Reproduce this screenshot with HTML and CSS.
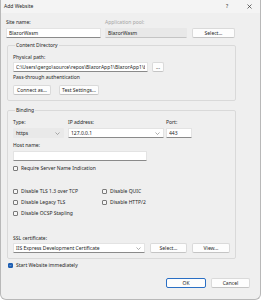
FILE: index.html
```html
<!DOCTYPE html>
<html lang="en">
<head>
    <meta charset="UTF-8">
    <meta name="viewport" content="width=device-width, initial-scale=1.0">
    <title>Add Website</title>
    <link rel="stylesheet" href="styles.css">
</head>
<body>

    <div class="dialog">
        <div class="titlebar">
            <span class="title">Add Website</span>
            <span class="tb-btn help">?</span>
            <span class="tb-btn close">
                <svg width="5" height="5" viewBox="0 0 5 5"><path d="M0.5 0.5L4.5 4.5M4.5 0.5L0.5 4.5" stroke="#333" stroke-width="0.7"/></svg>
            </span>
        </div>

        <div class="content">
            <div class="top-row">
                <div class="field site">
                    <label>Site name:</label>
                    <input class="textbox" type="text" value="BlazorWasm">
                </div>
                <div class="field pool">
                    <label class="disabled">Application pool:</label>
                    <input class="textbox readonly" type="text" value="BlazorWasm" readonly>
                </div>
                <button class="btn pool-btn">Select...</button>
            </div>

            <fieldset class="group content-dir">
                <legend>Content Directory</legend>
                <label class="phys">Physical path:</label>
                <div class="path-row">
                    <input class="textbox path" type="text" value="C:\Users\gergo\source\repos\BlazorApp1\BlazorApp1\b">
                    <button class="btn dots">...</button>
                </div>
                <label class="pass">Pass-through authentication</label>
                <div class="btn-row">
                    <button class="btn connect">Connect as...</button>
                    <button class="btn test">Test Settings...</button>
                </div>
            </fieldset>

            <fieldset class="group binding">
                <legend>Binding</legend>
                <div class="binding-row">
                    <div class="field type">
                        <label>Type:</label>
                        <div class="combo gray">https
                            <svg class="chev" width="5" height="3" viewBox="0 0 5 3"><path d="M0.5 0.5L2.5 2.5L4.5 0.5" fill="none" stroke="#777" stroke-width="0.6"/></svg>
                        </div>
                    </div>
                    <div class="field ip">
                        <label>IP address:</label>
                        <div class="combo">127.0.0.1
                            <svg class="chev" width="5" height="3" viewBox="0 0 5 3"><path d="M0.5 0.5L2.5 2.5L4.5 0.5" fill="none" stroke="#777" stroke-width="0.6"/></svg>
                        </div>
                    </div>
                    <div class="field port">
                        <label>Port:</label>
                        <input class="textbox" type="text" value="443">
                    </div>
                </div>

                <label class="host-label">Host name:</label>
                <input class="textbox host" type="text" value="">

                <div class="check-item sni"><span class="check"></span>Require Server Name Indication</div>

                <div class="check-grid">
                    <div class="check-item"><span class="check"></span>Disable TLS 1.3 over TCP</div>
                    <div class="check-item"><span class="check"></span>Disable QUIC</div>
                    <div class="check-item"><span class="check"></span>Disable Legacy TLS</div>
                    <div class="check-item"><span class="check"></span>Disable HTTP/2</div>
                    <div class="check-item"><span class="check"></span>Disable OCSP Stapling</div>
                </div>

                <label class="ssl-label">SSL certificate:</label>
                <div class="cert-row">
                    <div class="combo cert">IIS Express Development Certificate
                        <svg class="chev" width="5" height="3" viewBox="0 0 5 3"><path d="M0.5 0.5L2.5 2.5L4.5 0.5" fill="none" stroke="#777" stroke-width="0.6"/></svg>
                    </div>
                    <button class="btn cert-select">Select...</button>
                    <button class="btn cert-view">View...</button>
                </div>
            </fieldset>

            <div class="check-item start">
                <span class="check checked">
                    <svg width="5" height="5" viewBox="0 0 5 5"><path d="M1 2.6L2 3.6L4 1.4" fill="none" stroke="#fff" stroke-width="0.7"/></svg>
                </span>Start Website immediately
            </div>

            <div class="footer">
                <button class="btn ok">OK</button>
                <button class="btn cancel">Cancel</button>
            </div>
        </div>
    </div>

</body>
</html>
```

FILE: styles.css
```css
body {
    margin: 0;
    font-family: "Noto Sans", "Open Sans", sans-serif;
    font-size: 5px;
    line-height: 7px;
    color: #262626;
    background: #ffffff;
}
.dialog {
    width: 261px;
    height: 300px;
    box-sizing: border-box;
    background: #efefef;
    border: 1px solid #b8b8b8;
    border-top: none;
    border-radius: 0 0 6px 6px;
    overflow: hidden;
}
.titlebar {
    height: 13px;
    display: flex;
    align-items: center;
    padding-left: 3px;
    background: #f4f4f4;
}
.title {
    flex: 1;
}
.tb-btn {
    width: 22px;
    text-align: center;
    display: flex;
    justify-content: center;
    align-items: center;
}
.content {
    padding: 6px 0 0 5px;
}
label {
    display: block;
}
label.disabled {
    color: #a3a3a3;
}
.textbox {
    box-sizing: border-box;
    height: 10px;
    font: inherit;
    padding: 0 2px;
    margin: 0;
    border: 1px solid #e3e3e3;
    border-bottom-color: #8a8a8a;
    border-radius: 1px;
    background: #ffffff;
    color: #262626;
    outline: none;
}
.textbox.readonly {
    background: #e8e8e8;
    border-color: #e8e8e8;
    border-bottom-color: #c4c4c4;
}
.btn {
    box-sizing: border-box;
    height: 10px;
    font: inherit;
    padding: 0;
    margin: 0;
    background: #fdfdfd;
    border: 1px solid #dadada;
    border-bottom-color: #c4c4c4;
    border-radius: 2px;
    color: #262626;
}
.top-row {
    display: flex;
    align-items: flex-end;
}
.field {
    display: flex;
    flex-direction: column;
    gap: 2px;
}
.site .textbox { width: 95px; }
.pool { margin-left: 4px; }
.pool .textbox { width: 82px; }
.pool-btn { width: 43px; margin-left: 5px; }

.group {
    margin: 4px 0 0 1px;
    width: 229px;
    box-sizing: border-box;
    border: 1px solid #d9d9d9;
    border-radius: 2px;
    padding: 3px 5px 5px 5px;
}
.group legend {
    padding: 0 1px;
    margin-left: 2px;
}
.phys { margin-top: 2px; }
.path-row {
    display: flex;
    gap: 4px;
    margin-top: 1px;
}
.path { width: 135px; }
.dots { width: 12px; }
.pass { margin-top: 2px; }
.btn-row {
    display: flex;
    gap: 8px;
    margin-top: 4px;
}
.connect { width: 38px; }
.test { width: 40px; }

.binding { margin-top: 6px; padding-top: 5px; }
.binding-row {
    display: flex;
    align-items: flex-end;
}
.combo {
    box-sizing: border-box;
    height: 10px;
    display: flex;
    align-items: center;
    justify-content: space-between;
    padding: 0 3px 0 2px;
    background: #ffffff;
    border: 1px solid #e3e3e3;
    border-bottom-color: #8a8a8a;
    border-radius: 1px;
}
.combo.gray {
    background: #e9e9e9;
    border-color: #e9e9e9;
}
.type .combo { width: 51px; }
.ip { margin-left: 4px; }
.ip .combo { width: 96px; }
.port { margin-left: 2px; }
.port .textbox { width: 26px; }

.host-label { margin-top: 4px; }
.host { width: 134px; margin-top: 2px; display: block; }

.check-item {
    display: flex;
    align-items: center;
    gap: 3px;
}
.check {
    box-sizing: border-box;
    width: 5px;
    height: 5px;
    border: 0.6px solid #7a7a7a;
    border-radius: 1px;
    background: #f6f6f6;
    display: flex;
    align-items: center;
    justify-content: center;
}
.check.checked {
    background: #1e5fb3;
    border-color: #1e5fb3;
}
.sni { margin-top: 4px; }
.check-grid {
    display: grid;
    grid-template-columns: 89px 1fr;
    row-gap: 4px;
    margin-top: 16px;
}
.ssl-label { margin-top: 18px; }
.cert-row {
    display: flex;
    margin-top: 1px;
}
.cert { width: 132px; }
.cert-select { width: 37px; margin-left: 5px; }
.cert-view { width: 38px; margin-left: 5px; }

.start { margin: 3px 0 0 2px; }
.footer {
    display: flex;
    justify-content: flex-end;
    gap: 5px;
    margin: 9px 10px 0 0;
}
.ok {
    width: 40px;
    border: 1px solid #2a6fc4;
}
.cancel { width: 39px; }
```
